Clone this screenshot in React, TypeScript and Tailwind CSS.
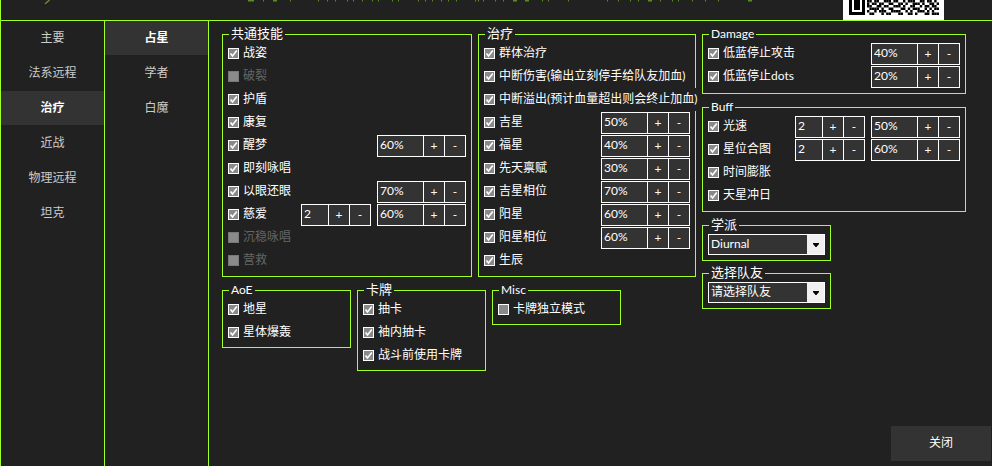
import React from "react";

const FONT = "font-['Lato','Noto_Sans_CJK_SC','Liberation_Sans',sans-serif]";

function Check({ on = true, off = false }: { on?: boolean; off?: boolean }) {
  return (
    <span className={`flex h-[11px] w-[11px] shrink-0 border bg-[#8a8a8a] ${off ? "border-[#777777]" : "border-white"}`}>
      {on && !off && (
        <svg viewBox="0 0 9 9" className="h-[9px] w-[9px]">
          <path d="M1.5 4.5 L3.5 7 L7.8 1.5" fill="none" stroke="#ffffff" strokeWidth="1.6" />
        </svg>
      )}
    </span>
  );
}

function Stepper({ value, small = false }: { value: string; small?: boolean }) {
  return (
    <div className={`flex h-[22px] shrink-0 border border-white bg-[#333333] text-[12px] leading-[18px] text-white ${small ? "w-[70px]" : "w-[89px]"}`}>
      <span className="min-w-0 flex-1 pl-[2px]">{value}</span>
      <span className="flex w-[21px] items-center justify-center border-l border-white">+</span>
      <span className="flex w-[21px] items-center justify-center border-l border-white">-</span>
    </div>
  );
}

function Row({
  label,
  off = false,
  unchecked = false,
  steppers,
  cover = false,
}: {
  label: string;
  off?: boolean;
  unchecked?: boolean;
  steppers?: React.ReactNode;
  cover?: boolean;
}) {
  return (
    <div className={`flex h-[23px] items-center gap-[4px] ${cover ? "relative w-[212px] bg-[#212121]" : ""}`}>
      <Check on={!unchecked} off={off} />
      <span className={`whitespace-nowrap pb-[2px] text-[12px] leading-[21px] ${off ? "text-[#666666]" : "text-white"}`}>{label}</span>
      {steppers && <div className="ml-auto flex gap-[6px]">{steppers}</div>}
    </div>
  );
}

function Group({
  title,
  big = false,
  className,
  children,
}: {
  title: string;
  big?: boolean;
  className: string;
  children: React.ReactNode;
}) {
  return (
    <div className={`relative shrink-0 border border-[#a4ff26] pl-[5px] pr-[5px] pt-[7px] ${className}`}>
      <span className={`absolute left-[6px] top-[-10px] bg-[#212121] px-[2px] pb-[1px] leading-[17px] text-white ${big ? "text-[13px]" : "text-[12px]"}`}>
        {title}
      </span>
      {children}
    </div>
  );
}

function Select({ value }: { value: string }) {
  return (
    <div className="flex h-[21px] w-[117px] border border-white bg-[#333333] text-[12px] leading-[18px] text-white">
      <span className="flex-1 pl-[2px]">{value}</span>
      <span className="flex w-[17px] items-center justify-center bg-[#f0f0f0]">
        <svg viewBox="0 0 6 4" className="h-[4px] w-[6px]">
          <path d="M0 0 H6 V1 L3.5 4 H2.5 L0 1 Z" fill="#000000" />
        </svg>
      </span>
    </div>
  );
}

function Nav({ items, active, className }: { items: string[]; active: string; className: string }) {
  return (
    <div className={`flex shrink-0 flex-col gap-px border-r border-[#a4ff26] ${className}`}>
      {items.map((t) => (
        <div
          key={t}
          className={`flex h-[34px] items-center justify-center pb-[1px] text-[12px] ${
            t === active ? "bg-[#333333] font-bold text-white" : "text-[#cccccc]"
          }`}
        >
          {t}
        </div>
      ))}
    </div>
  );
}

const headerMarks = [
  248, 249, 250, 251, 252, 253, 263, 273, 274, 275, 276, 290, 318, 327, 335, 347, 353, 362, 372, 378, 392, 398, 418,
  425, 432, 441, 448, 456, 475, 478, 483, 495, 503, 513, 514, 515, 516, 525, 526, 527, 528, 542, 548, 568, 607, 618,
  630, 638, 648, 649, 650, 651, 660, 672, 678, 692, 705, 718, 748, 749, 750, 751,
];

const qrRows = [
  "110110011101100101110011011010",
  "101101100110011010011101001101",
  "110011011001110100110010110110",
  "011110100110001101011100101011",
  "100101110011110010100111010100",
  "011000101100011001101000110111",
];

function Header() {
  return (
    <div className="h-[20px] shrink-0">
      <svg width="991" height="20" viewBox="0 0 991 20" className="block">
        <path d="M48.5 0 L44 4" stroke="#6d8f2e" strokeWidth="1.4" />
        <path d="M47 3 L44 6" stroke="#111111" strokeWidth="1" opacity="0.6" />
        {headerMarks.map((x) => (
          <rect key={x} x={x - 1} y="0" width="1" height="1.5" fill="#5d8a22" />
        ))}
        <rect x="842" y="0" width="101" height="20" fill="#ffffff" />
        <path d="M848 0 H864 V15 H848 Z M851 0 V12 H861 V0 Z" fill="#000000" fillRule="evenodd" />
        <rect x="853" y="0" width="6" height="10" fill="#000000" />
        {qrRows.map((row, r) =>
          row.split("").map((c, i) =>
            c === "1" ? (
              <rect key={`${r}-${i}`} x={866 + i * 2.4} y={r * 2.5} width="2.4" height="2.5" fill="#000000" />
            ) : null
          )
        )}
      </svg>
    </div>
  );
}

export default function App() {
  return (
    <div className={`flex h-[466px] w-[992px] flex-col overflow-hidden border-l border-[#a4ff26] bg-[#212121] ${FONT}`}>
      <Header />
      <div className="flex min-h-0 flex-1 border-t border-[#a4ff26]">
        <Nav className="w-[104px]" items={["主要", "法系远程", "治疗", "近战", "物理远程", "坦克"]} active="治疗" />
        <Nav className="w-[104px]" items={["占星", "学者", "白魔"]} active="占星" />
        <div className="flex min-w-0 flex-1 flex-col">
          <div className="flex gap-[6px] pl-[13px] pt-[13px]">
            <div className="flex w-[474px] shrink-0 flex-col gap-[13px]">
              <div className="flex gap-[6px]">
                <Group title="共通技能" big className="h-[243px] w-[250px]">
                  <Row label="战姿" />
                  <Row label="破裂" off />
                  <Row label="护盾" />
                  <Row label="康复" />
                  <Row label="醒梦" steppers={<Stepper value="60%" />} />
                  <Row label="即刻咏唱" />
                  <Row label="以眼还眼" steppers={<Stepper value="70%" />} />
                  <Row
                    label="慈爱"
                    steppers={
                      <>
                        <Stepper value="2" small />
                        <Stepper value="60%" />
                      </>
                    }
                  />
                  <Row label="沉稳咏唱" off />
                  <Row label="营救" off />
                </Group>
                <Group title="治疗" big className="h-[243px] w-[218px]">
                  <Row label="群体治疗" />
                  <Row label="中断伤害(输出立刻停手给队友加血)" />
                  <Row label="中断溢出(预计血量超出则会终止加血)" cover />
                  <Row label="吉星" steppers={<Stepper value="50%" />} />
                  <Row label="福星" steppers={<Stepper value="40%" />} />
                  <Row label="先天禀赋" steppers={<Stepper value="30%" />} />
                  <Row label="吉星相位" steppers={<Stepper value="70%" />} />
                  <Row label="阳星" steppers={<Stepper value="60%" />} />
                  <Row label="阳星相位" steppers={<Stepper value="60%" />} />
                  <Row label="生辰" />
                </Group>
              </div>
              <div className="flex items-start gap-[6px]">
                <Group title="AoE" className="h-[58px] w-[129px]">
                  <Row label="地星" />
                  <Row label="星体爆轰" />
                </Group>
                <Group title="卡牌" big className="h-[81px] w-[129px]">
                  <Row label="抽卡" />
                  <Row label="袖内抽卡" />
                  <Row label="战斗前使用卡牌" />
                </Group>
                <Group title="Misc" className="h-[35px] w-[129px]">
                  <Row label="卡牌独立模式" unchecked />
                </Group>
              </div>
            </div>
            <div className="flex w-[264px] shrink-0 flex-col items-start">
              <Group title="Damage" className="h-[60px] w-[264px]">
                <Row label="低蓝停止攻击" steppers={<Stepper value="40%" />} />
                <Row label="低蓝停止dots" steppers={<Stepper value="20%" />} />
              </Group>
              <Group title="Buff" className="mt-[13px] h-[105px] w-[264px]">
                <Row
                  label="光速"
                  steppers={
                    <>
                      <Stepper value="2" small />
                      <Stepper value="50%" />
                    </>
                  }
                />
                <Row
                  label="星位合图"
                  steppers={
                    <>
                      <Stepper value="2" small />
                      <Stepper value="60%" />
                    </>
                  }
                />
                <Row label="时间膨胀" />
                <Row label="天星冲日" />
              </Group>
              <Group title="学派" big className="mt-[13px] h-[36px] w-[129px] !pt-[8px]">
                <Select value="Diurnal" />
              </Group>
              <Group title="选择队友" big className="mt-[12px] h-[36px] w-[129px] !pt-[8px]">
                <Select value="请选择队友" />
              </Group>
            </div>
          </div>
          <button className="mb-[5px] mr-px mt-auto flex h-[35px] w-[100px] items-center justify-center self-end bg-[#333333] pb-[1px] text-[12px] text-white">
            关闭
          </button>
        </div>
      </div>
    </div>
  );
}
